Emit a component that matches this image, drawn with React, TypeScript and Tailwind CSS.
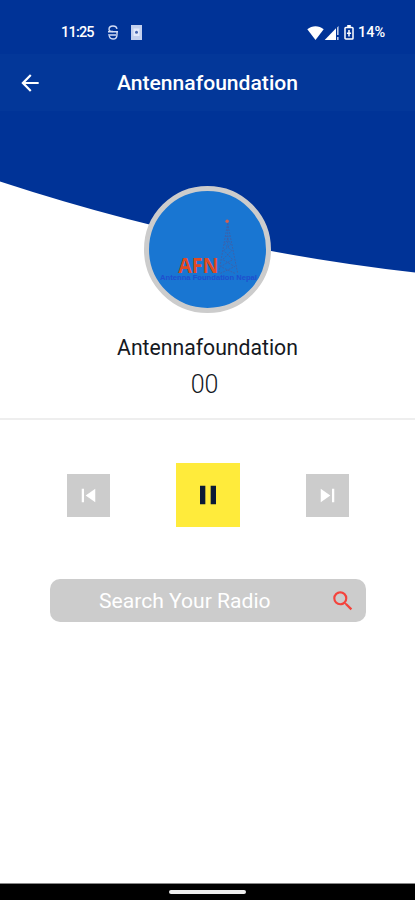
import type { ReactNode } from 'react'
import { MdArrowBack, MdPause, MdSearch, MdSkipNext, MdSkipPrevious } from 'react-icons/md'

const STATION = 'Antennafoundation'

function StatusBar() {
  return (
    <div className="flex h-[54px] items-start justify-between bg-[#003397] pt-[23px] pr-[29px] pl-[61px]">
      <div className="flex h-[19px] items-center">
        <span className="w-[33px] pt-[2px] whitespace-nowrap text-[14.5px] leading-none font-medium tracking-[-0.8px]">11:25</span>
        <svg className="ml-[13px]" width="12" height="15" viewBox="0 0 12 15" fill="none" stroke="#d3ddf5" strokeWidth="1.4">
          <path d="M10 3.800C9.600 1.800 8 1 6 1S2 2 2 4.200c0 1.600 1.300 2.300 4 2.300" />
          <path d="M1 6.800h10M2 9c0 3.300 1.700 5 4 5s4-1.700 4-4.600V6.800M3 10h6" />
        </svg>
        <svg className="ml-[12px]" width="11" height="15" viewBox="0 0 11 15">
          <rect width="11" height="15" fill="#c3d0ee" />
          <rect x="2.500" y="3.500" width="6" height="7.500" fill="#e4eafa" />
          <circle cx="5.500" cy="7.300" r="1.500" fill="#4766b0" />
        </svg>
      </div>
      <div className="flex h-[19px] items-center">
        <svg width="17" height="14" viewBox="0 0 17 14" fill="#fff">
          <path d="M8.500 14 .3 3.300C2.700 1.300 5.500.3 8.500.3s5.800 1 8.200 3z" />
        </svg>
        <svg width="16" height="14" viewBox="0 0 16 14" fill="#fff">
          <path d="M.7 14 12 2.300V14z" />
          <path d="M13 1.500 14.600 0v9H13zM13 11h1.600v3H13z" opacity=".75" />
        </svg>
        <svg className="ml-[4px]" width="10" height="15" viewBox="0 0 10 15" fill="none" stroke="#fff" strokeWidth="1.500">
          <path d="M3.200 1h3.600" strokeWidth="2" />
          <rect x="1" y="2.500" width="8" height="11.500" rx=".8" />
          <path d="M5 5v6.500M2.900 8.200h4.200" />
        </svg>
        <span className="ml-[4px] w-[28px] pt-[2px] whitespace-nowrap text-[14.5px] leading-none font-medium">14%</span>
      </div>
    </div>
  )
}

function StationLogo() {
  return (
    <div className="mt-[132px] size-[127px] rounded-full border-[5.500px] border-[#ccc] bg-[#1976d2]">
      <svg className="size-full" viewBox="0 0 116 116">
        <g fill="none" stroke="#3f5fa6" strokeWidth=".9" strokeDasharray="1.800 1.200">
          <path d="M78 32 69 82M78 32l10 50M78 32v22M76 44l5 9-7 6 9 9-12 7 15 7M80 44l-5 9 7 6-9 9 12 7-15 7" />
        </g>
        <circle cx="77.500" cy="30" r="1.700" fill="#d8604f" />
        <text x="29" y="81.500" textLength="40" lengthAdjust="spacingAndGlyphs" fontFamily="Open Sans, sans-serif" fontWeight="700" fontSize="21.500" fill="#e04b23">
          AFN
        </text>
        <text x="11" y="88.500" textLength="96" lengthAdjust="spacingAndGlyphs" fontFamily="Liberation Sans, sans-serif" fontWeight="700" fontSize="6.500" fill="#1f4fcf">
          Antenna Foundation Nepal
        </text>
      </svg>
    </div>
  )
}

function SkipButton({ label, children }: { label: string; children: ReactNode }) {
  return (
    <button aria-label={label} className="flex size-[43px] items-center justify-center bg-[#ccc] text-white">
      {children}
    </button>
  )
}

export default function App() {
  return (
    <div className="flex h-[900px] w-[415px] flex-col overflow-hidden bg-white font-['Roboto',sans-serif] text-white">
      <StatusBar />
      <header className="grid h-[57px] grid-cols-[60px_1fr_60px] items-center bg-[#033799]">
        <button aria-label="Back" className="ml-[17px]">
          <MdArrowBack size={26} />
        </button>
        <h1 className="pt-px text-center text-[21.1px] leading-none font-medium">{STATION}</h1>
      </header>

      {/* curved backdrop and logo share one grid cell */}
      <section className="-mt-[57px] grid h-[366px] shrink-0 border-b-2 border-[#eee]">
        <svg className="col-start-1 row-start-1 -mt-px" width="415" height="220" viewBox="0 0 415 220">
          <path d="M0 58h415v161.500Q206 196 0 128.500z" fill="#003397" />
        </svg>
        <div className="col-start-1 row-start-1 flex flex-col items-center">
          <StationLogo />
          <h2 className="mt-[24px] text-[21.2px] leading-[22px] text-[#15191f]">{STATION}</h2>
          <p className="mt-[13px] -ml-[6px] text-[25px] leading-[26px] font-light text-[#15191f]">00</p>
        </div>
      </section>

      <div className="mt-[43px] flex items-center justify-between pr-[66px] pl-[67px]">
        <SkipButton label="Previous">
          <MdSkipPrevious size={27} />
        </SkipButton>
        <button aria-label="Pause" className="flex size-[64px] items-center justify-center bg-[#ffeb3b] text-[#0b1a35]">
          <MdPause size={32} />
        </button>
        <SkipButton label="Next">
          <MdSkipNext size={27} />
        </SkipButton>
      </div>

      <div className="mt-[52px] ml-[50px] flex h-[43px] w-[316px] items-center justify-between rounded-[10px] bg-[#ccc] pr-[10px] pl-[49px]">
        <span className="pt-px text-[21.1px] leading-none">Search Your Radio</span>
        <MdSearch size={26} className="text-[#f4433c]" />
      </div>

      <footer className="mt-auto flex h-[17px] items-center justify-center border-t border-[#888] bg-black">
        <div className="h-[4px] w-[77px] rounded-full bg-[#eee]" />
      </footer>
    </div>
  )
}
